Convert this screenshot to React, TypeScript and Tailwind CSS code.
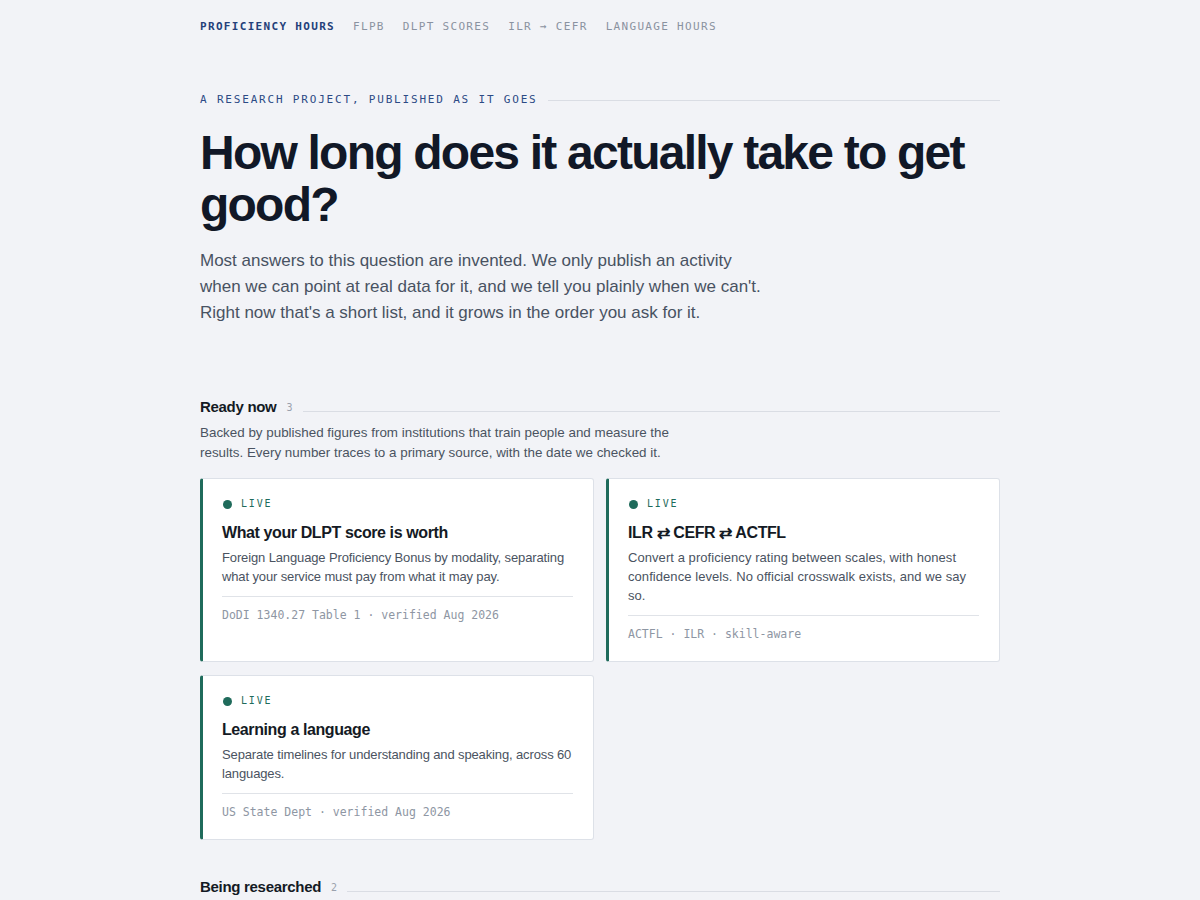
import React from "react";

const mono = { fontFamily: '"DejaVu Sans Mono", "Liberation Mono", monospace' };

function Card({
  title,
  desc,
  foot,
  descTracking = "tracking-[-0.01em]",
}: {
  title: React.ReactNode;
  desc: string;
  foot: string;
  descTracking?: string;
}) {
  return (
    <div className="flex flex-col rounded-[3px] border border-[#dde1e8] border-l-[3px] border-l-[#1f6b5b] bg-white pl-[19px] pr-5 pt-[18px] pb-[19px]">
      <div className="flex items-center gap-[9px] text-[10px] leading-[14px] tracking-[0.18em] text-[#1f6b5b]" style={mono}>
        <span className="ml-px h-[9px] w-[9px] rounded-full bg-[#1f6b5b]" />
        LIVE
      </div>
      <div className="mt-[11px] text-[16px] font-semibold leading-[22px] tracking-[-0.025em] text-[#141a24]">{title}</div>
      <p className={`mt-[4px] text-[13px] leading-[19px] text-[#4a5361] ${descTracking}`}>{desc}</p>
      <div className="mt-[10px] border-t border-[#e0e3e8] pt-[10px] text-[11.5px] leading-[16px] text-[#8e96a3]" style={mono}>
        {foot}
      </div>
    </div>
  );
}

function SectionHead({ label, count }: { label: string; count: string }) {
  return (
    <div className="flex items-center gap-[10px]">
      <span className="text-[15px] font-semibold leading-[20px] tracking-[-0.02em] text-[#141a24]">{label}</span>
      <span className="text-[10px] text-[#9aa1ad]" style={mono}>{count}</span>
      <div className="mt-[8px] h-px flex-1 bg-[#dadde4]" />
    </div>
  );
}

export default function App() {
  return (
    <div className="min-h-[900px] bg-[#f2f3f7] text-[#141a24]" style={{ fontFamily: '"Liberation Sans", Arial, sans-serif' }}>
      <div className="mx-auto w-[800px]">
        <nav className="flex items-center gap-[18px] pt-[20px] text-[11px] leading-[14px] tracking-[0.12em] text-[#8a92a0]" style={mono}>
          <span className="font-bold text-[#24407a]">PROFICIENCY HOURS</span>
          <span>FLPB</span>
          <span>DLPT SCORES</span>
          <span>ILR → CEFR</span>
          <span>LANGUAGE HOURS</span>
        </nav>

        <div className="mt-[59px] flex items-center gap-[10px]">
          <span className="whitespace-nowrap text-[11px] leading-[14px] tracking-[0.165em] text-[#2c4a85]" style={mono}>
            A RESEARCH PROJECT, PUBLISHED AS IT GOES
          </span>
          <div className="h-px flex-1 bg-[#dadde4]" />
        </div>

        <h1 className="mt-[20px] text-[48px] font-bold leading-[52px] tracking-[-0.037em] text-[#111827]">
          How long does it actually take to get good?
        </h1>

        <p className="mt-[17px] w-[570px] text-[17px] leading-[26px] text-[#485262]">
          Most answers to this question are invented. We only publish an activity when we can point at real data for it, and we tell you plainly when we can't. Right now that's a short list, and it grows in the order you ask for it.
        </p>

        <section className="mt-[71px]">
          <SectionHead label="Ready now" count="3" />
          <p className="mt-[6px] w-[490px] text-[13.4px] leading-[20px] text-[#4a5361]">
            Backed by published figures from institutions that train people and measure the results. Every number traces to a primary source, with the date we checked it.
          </p>

          <div className="mt-[15px] grid grid-cols-2 gap-x-[12px] gap-y-[13px]">
            <Card
              title="What your DLPT score is worth"
              desc="Foreign Language Proficiency Bonus by modality, separating what your service must pay from what it may pay."
              foot="DoDI 1340.27 Table 1 · verified Aug 2026"
            />
            <Card
              title={<>ILR ⇄ CEFR ⇄ ACTFL</>}
              desc="Convert a proficiency rating between scales, with honest confidence levels. No official crosswalk exists, and we say so."
              foot="ACTFL · ILR · skill-aware"
              descTracking="tracking-[0.005em]"
            />
            <Card
              title="Learning a language"
              desc="Separate timelines for understanding and speaking, across 60 languages."
              foot="US State Dept · verified Aug 2026"
            />
          </div>
        </section>

        <section className="mt-[37px] pb-[40px]">
          <SectionHead label="Being researched" count="2" />
        </section>
      </div>
    </div>
  );
}
